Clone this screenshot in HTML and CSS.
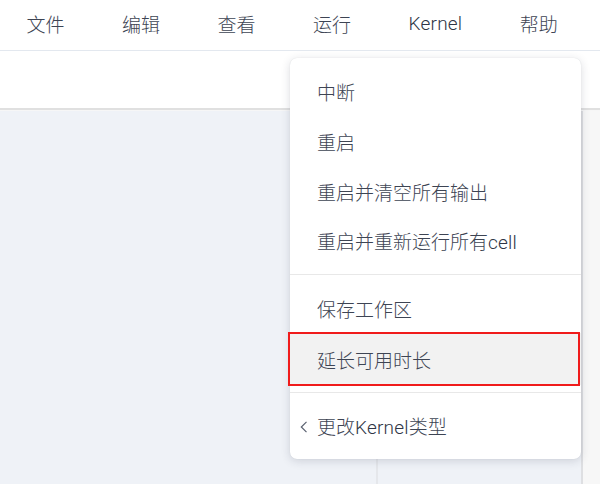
FILE: index.html
```html
<!DOCTYPE html>
<html lang="zh-CN">
<head>
<meta charset="utf-8">
<title>Kernel 菜单</title>
<link rel="stylesheet" href="styles.css">
</head>
<body>
<header class="menubar">
  <span class="menubar-item">文件</span>
  <span class="menubar-item">编辑</span>
  <span class="menubar-item">查看</span>
  <span class="menubar-item">运行</span>
  <span class="menubar-item latin">Kernel</span>
  <span class="menubar-item">帮助</span>
</header>
<div class="toolbar"></div>
<main class="workspace">
  <section class="pane pane-left"></section>
  <section class="pane pane-main"></section>
  <aside class="pane pane-side"></aside>
</main>

<div class="dropdown">
  <div class="group">
    <div class="item">中断</div>
    <div class="item">重启</div>
    <div class="item">重启并清空所有输出</div>
    <div class="item"><span>重启并重新运行所有<span class="latin">cell</span></span></div>
  </div>
  <div class="group">
    <div class="item">保存工作区</div>
    <div class="item item-active">延长可用时长</div>
  </div>
  <div class="group">
    <div class="item item-sub">
      <svg class="chevron" width="8" height="12" viewBox="0 0 8 12"><path d="M6.5 0.8 L1.3 6 L6.5 11.2" fill="none" stroke="#5a6170" stroke-width="1.2"/></svg>
      <span>更改<span class="latin">Kernel</span>类型</span>
    </div>
  </div>
</div>
</body>
</html>
```
FILE: styles.css
```css
* { box-sizing: border-box; }
html, body { margin: 0; height: 100%; }
body {
  font-family: "Noto Sans CJK SC", sans-serif;
  font-weight: 300;
  color: #3d4453;
  background: #eff2f7;
  overflow: hidden;
  position: relative;
  height: 484px;
  display: flex;
  flex-direction: column;
}
.latin {
  font-family: "Roboto", "Liberation Sans", sans-serif;
  font-weight: 300;
  color: #2f3646;
  letter-spacing: 0.2px;
}
.menubar {
  height: 51px;
  background: #fff;
  border-bottom: 1px solid #e3e8ef;
  display: flex;
  align-items: center;
  gap: 57.5px;
  padding: 0 0 3px 26.5px;
  font-size: 19px;
  flex: none;
}
.menubar-item { line-height: 1; }
.toolbar {
  height: 59px;
  background: #fff;
  border-bottom: 2px solid #e0e0e0;
  flex: none;
}
.workspace {
  flex: 1;
  display: flex;
  border-top: 1px solid #f6f6f6;
}
.pane-left {
  width: 378px;
  background: #eff2f7;
  border-right: 2px solid #e5e7eb;
  flex: none;
}
.pane-main {
  flex: 1;
  background: #eff2f7;
}
.pane-side {
  width: 19px;
  flex: none;
  background: #f7f7f7;
  border-left: 2px solid #dedfe2;
}
.dropdown {
  position: absolute;
  left: 290px;
  top: 58px;
  width: 291px;
  background: #fff;
  border-radius: 7px;
  box-shadow: 0 2px 10px rgba(30, 40, 60, 0.16), 0 0 1px rgba(30, 40, 60, 0.15);
  font-size: 19px;
}
.group { padding: 8px 0; }
.group + .group { border-top: 1px solid #e8e8e8; }
.item {
  height: 50px;
  display: flex;
  align-items: center;
  padding-left: 27px;
  line-height: 1;
  position: relative;
}
.item-active {
  background: #f2f2f2;
  height: 52px;
}
.item-active::after {
  content: "";
  position: absolute;
  left: -2px;
  right: 1px;
  top: -1px;
  bottom: -1px;
  border: 2px solid #f01b1b;
}
.group:nth-child(2) { padding-bottom: 7px; }
.item-sub { padding-left: 10px; }
.chevron { margin-right: 9px; margin-top: 2px; }
```
